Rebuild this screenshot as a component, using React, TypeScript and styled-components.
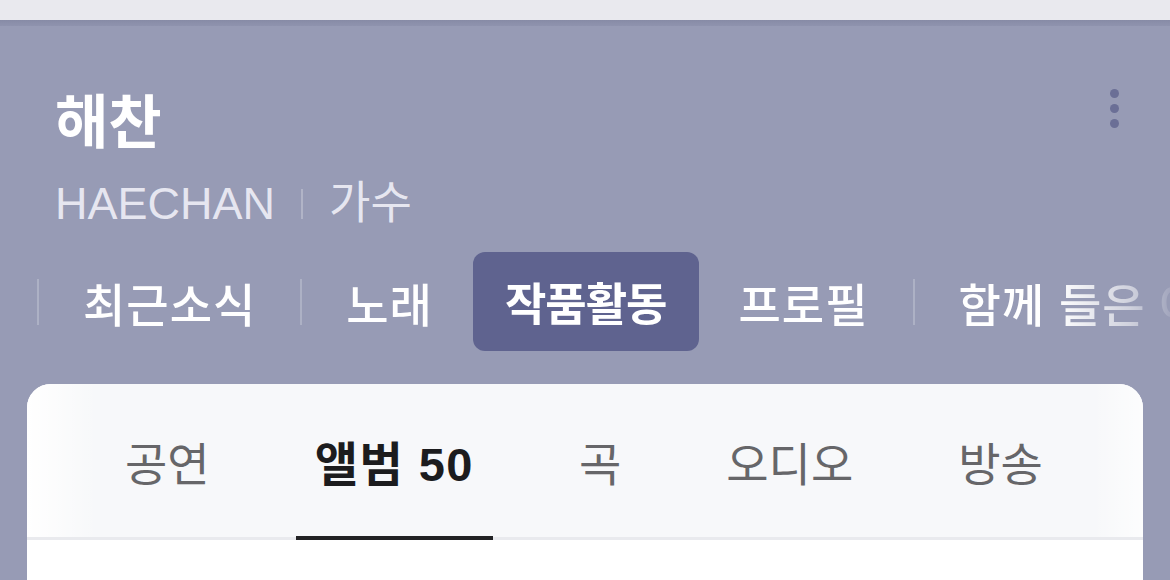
import React from "react";
import styled, { createGlobalStyle } from "styled-components";

const GlobalStyle = createGlobalStyle`
  html, body {
    margin: 0;
    padding: 0;
    background: #979bb5;
  }
  body {
    font-family: "Liberation Sans", "Noto Sans CJK KR", sans-serif;
    -webkit-font-smoothing: antialiased;
  }
`;

const Page = styled.div`
  width: 1170px;
  height: 580px;
  overflow: hidden;
  display: flex;
  flex-direction: column;
  background: #979bb5;
`;

const StatusStrip = styled.div`
  height: 20px;
  background: #e9e9ee;
  flex-shrink: 0;
`;

const ShadowBand = styled.div`
  height: 6px;
  background: linear-gradient(#878ba6, #8f93ae);
  flex-shrink: 0;
`;

const Header = styled.header`
  display: flex;
  justify-content: space-between;
  align-items: flex-start;
  padding: 65px 38px 0 55px;
`;

const TitleBlock = styled.div`
  display: flex;
  flex-direction: column;
  gap: 22px;
`;

const Title = styled.h1`
  margin: 0;
  font-size: 58px;
  line-height: 64px;
  font-weight: 700;
  color: #ffffff;
`;

const SubRow = styled.div`
  display: flex;
  align-items: center;
  gap: 26px;
  font-size: 45px;
  line-height: 54px;
  color: rgba(245, 245, 252, 0.85);
`;

const SubDivider = styled.span`
  width: 2px;
  height: 30px;
  background: rgba(255, 255, 255, 0.25);
`;

const KebabButton = styled.button`
  margin-top: -2px;
  border: 0;
  background: transparent;
  padding: 0;
  width: 36px;
  height: 39px;
  display: flex;
  flex-direction: column;
  align-items: center;
  justify-content: center;
  gap: 6px;
`;

const Dot = styled.span`
  width: 9px;
  height: 9px;
  border-radius: 50%;
  background: #6b6f96;
`;

const TabsRow = styled.nav`
  margin-top: 21px;
  display: flex;
  align-items: center;
  gap: 15px;
  padding-left: 33px;
  white-space: nowrap;
  overflow: hidden;
  -webkit-mask-image: linear-gradient(to right, #000 calc(100% - 115px), rgba(0,0,0,0.55) calc(100% - 40px), rgba(0,0,0,0.12) 100%);
  mask-image: linear-gradient(to right, #000 calc(100% - 115px), rgba(0,0,0,0.55) calc(100% - 40px), rgba(0,0,0,0.12) 100%);
`;

const TabSep = styled.span`
  flex-shrink: 0;
  width: 2px;
  height: 46px;
  margin: 0 4px;
  background: rgba(255, 255, 255, 0.22);
`;

const TopTab = styled.span<{ $active?: boolean }>`
  flex-shrink: 0;
  height: 99px;
  display: flex;
  align-items: center;
  padding: 0 ${(p) => (p.$active ? 32 : 25)}px;
  border-radius: 12px;
  font-size: ${(p) => (p.$active ? 45 : 46)}px;
  letter-spacing: ${(p) => (p.$active ? -1 : 1)}px;
  font-weight: ${(p) => (p.$active ? 700 : 500)};
  color: #ffffff;
  background: ${(p) => (p.$active ? "#5f638f" : "transparent")};
`;

const Card = styled.section`
  margin: 33px 27px 0 27px;
  flex: 1;
  border-radius: 24px 24px 0 0;
  background: #ffffff;
  overflow: hidden;
  position: relative;
`;

const CardTabs = styled.div`
  position: relative;
  height: 153px;
  display: flex;
  align-items: stretch;
  gap: 67px;
  padding-left: 79px;
  background: #f7f8fa;
  border-bottom: 3px solid #e9eaee;
  &::before {
    content: "";
    position: absolute;
    left: 0;
    top: 0;
    bottom: 0;
    width: 70px;
    background: linear-gradient(to right, #ffffff, rgba(255, 255, 255, 0));
  }
  &::after {
    content: "";
    position: absolute;
    right: 0;
    top: 0;
    bottom: 0;
    width: 50px;
    background: linear-gradient(to left, rgba(255, 255, 255, 0.7), rgba(255, 255, 255, 0));
  }
`;

const CardTab = styled.span<{ $active?: boolean }>`
  position: relative;
  display: flex;
  align-items: center;
  padding: 0 19px;
  font-size: ${(p) => (p.$active ? 47 : 46)}px;
  font-weight: ${(p) => (p.$active ? 700 : 400)};
  color: ${(p) => (p.$active ? "#1c1c1e" : "#666669")};
  letter-spacing: ${(p) => (p.$active ? "1.5px" : "0")};
  ${(p) =>
    p.$active &&
    `&::after {
      content: "";
      position: absolute;
      left: 0;
      right: 0;
      bottom: -3px;
      height: 4px;
      background: #222224;
    }`}
`;

const topTabs = ["최근소식", "노래", "작품활동", "프로필", "함께 들은 아티스트"];
const activeTop = 2;
const cardTabs = ["공연", "앨범 50", "곡", "오디오", "방송"];

export default function App() {
  return (
    <>
      <GlobalStyle />
      <Page>
        <StatusStrip />
        <ShadowBand />
        <Header>
          <TitleBlock>
            <Title>해찬</Title>
            <SubRow>
              <span>HAECHAN</span>
              <SubDivider />
              <span>가수</span>
            </SubRow>
          </TitleBlock>
          <KebabButton aria-label="더보기">
            <Dot />
            <Dot />
            <Dot />
          </KebabButton>
        </Header>
        <TabsRow>
          {topTabs.map((t, i) => {
            const showSep = i !== activeTop && i - 1 !== activeTop;
            return (
              <React.Fragment key={t}>
                {showSep && <TabSep />}
                <TopTab $active={i === activeTop}>{t}</TopTab>
              </React.Fragment>
            );
          })}
        </TabsRow>
        <Card>
          <CardTabs>
            {cardTabs.map((t, i) => (
              <CardTab key={t} $active={i === 1}>
                {t}
              </CardTab>
            ))}
          </CardTabs>
        </Card>
      </Page>
    </>
  );
}
